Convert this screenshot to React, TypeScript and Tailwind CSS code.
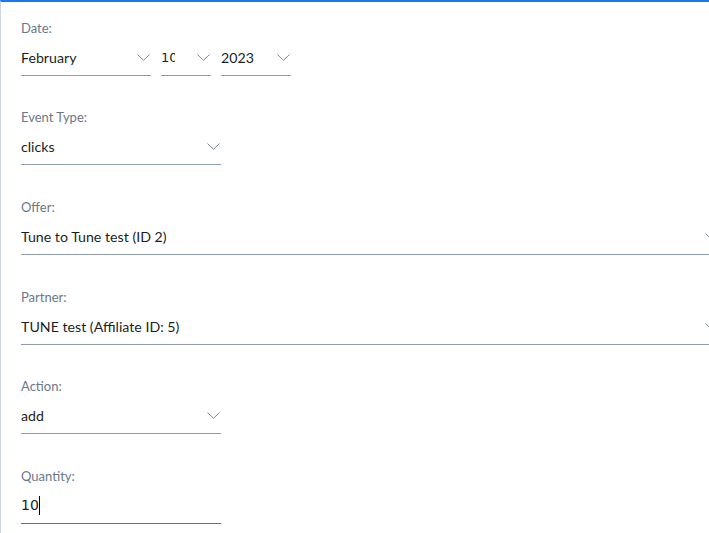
import React from 'react'

const font = { fontFamily: 'Lato, "Noto Sans", sans-serif' }

function Chevron() {
  return (
    <svg width="13" height="7" viewBox="0 0 13 7" fill="none" className="shrink-0">
      <path d="M0.5 0.5 L6.5 6.3 L12.5 0.5" stroke="#7c8898" strokeWidth="1" />
    </svg>
  )
}

function Label({ children }: { children: React.ReactNode }) {
  return <div className="text-[13px] leading-[20px] text-[#6b7789]">{children}</div>
}

function Select({ value, width, mono }: { value: string; width: string; mono?: boolean }) {
  return (
    <div className={`mt-[2px] h-[36px] ${width} shrink-0 flex items-center border-b border-[#8f9cae] pr-[1px]`}>
      <span
        className={`flex-1 min-w-0 overflow-hidden whitespace-nowrap text-[14.2px] text-[#1b1f24] ${mono ? 'mr-[22px]' : 'mr-2'}`}
        style={mono ? { fontFamily: '"DejaVu Sans", sans-serif', fontSize: '13px' } : undefined}
      >
        {value}
      </span>
      <Chevron />
    </div>
  )
}

export default function App() {
  return (
    <div className="w-[709px] h-[533px] overflow-hidden bg-white border-l border-[#cfd5dd] border-t-2 border-t-[#1877f2]" style={font}>
      <div className="pl-5 pt-4 w-[760px]">
        {/* Date */}
        <div>
          <Label>Date:</Label>
          <div className="flex gap-[10px]">
            <Select value="February" width="w-[130px]" />
            <Select value="10" width="w-[50px]" mono />
            <Select value="2023" width="w-[70px]" />
          </div>
        </div>

        {/* Event Type */}
        <div className="mt-[31px]">
          <Label>Event Type:</Label>
          <Select value="clicks" width="w-[200px]" />
        </div>

        {/* Offer */}
        <div className="mt-[32px]">
          <Label>Offer:</Label>
          <Select value="Tune to Tune test (ID 2)" width="w-[698px]" />
        </div>

        {/* Partner */}
        <div className="mt-[32px]">
          <Label>Partner:</Label>
          <Select value="TUNE test (Affiliate ID: 5)" width="w-[698px]" />
        </div>

        {/* Action */}
        <div className="mt-[31px]">
          <Label>Action:</Label>
          <Select value="add" width="w-[200px]" />
        </div>

        {/* Quantity */}
        <div className="mt-[32px]">
          <Label>Quantity:</Label>
          <div className="mt-[2px] h-[36px] w-[200px] flex items-center border-b border-[#1a7fe8]">
            <span className="text-[14px] text-[#1b1f24]" style={{ fontFamily: '"DejaVu Sans", sans-serif' }}>10</span>
            <span className="w-px h-[19px] bg-black" />
          </div>
        </div>
      </div>
    </div>
  )
}
